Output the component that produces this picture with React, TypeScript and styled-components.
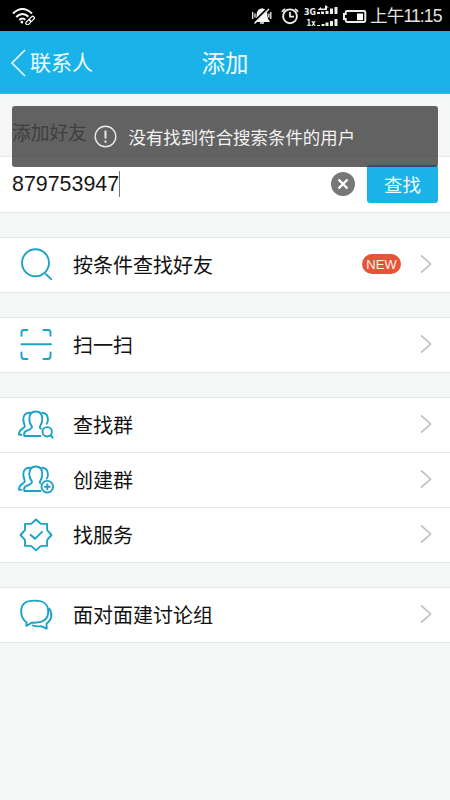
import React from "react";
import styled, { createGlobalStyle } from "styled-components";

const Global = createGlobalStyle`
  * { box-sizing: border-box; }
  body { margin: 0; background: #f5f7f7; }
`;

const Screen = styled.div`
  position: relative;
  width: 450px;
  height: 800px;
  overflow: hidden;
  background: #f5f7f7;
  color: #111;
  font-family: "Liberation Sans", "Noto Sans CJK SC", sans-serif;
`;

const StatusBar = styled.div`
  height: 31px;
  background: #000;
  display: flex;
  align-items: center;
  justify-content: space-between;
  padding: 0 8px 0 11px;
`;

const StatusIcons = styled.div`
  display: flex;
  align-items: center;
`;

const Clock = styled.span`
  width: 72px;
  margin-left: 3px;
  padding-top: 2px;
  color: #e2e2e2;
  font-family: "Liberation Sans", "Noto Sans CJK SC", sans-serif;
  font-size: 17.6px;
  letter-spacing: -0.9px;
  line-height: 29px;
  white-space: nowrap;
`;

const Header = styled.header`
  height: 63px;
  background: #1ab2e9;
  border-bottom: 1px solid #45b9dd;
  display: grid;
  grid-template-columns: 1fr auto 1fr;
  align-items: center;
  color: #edfcff;
`;

const Back = styled.div`
  display: flex;
  align-items: center;
  gap: 4px;
  padding: 2px 0 0 10px;
  font-size: 21px;
  line-height: 32px;
`;

const Title = styled.h1`
  margin: 0;
  padding-top: 3px;
  font-size: 23.5px;
  line-height: 30px;
  font-weight: 400;
`;

const SectionLabel = styled.div`
  height: 62px;
  padding: 24px 12px 0;
  font-size: 18.8px;
  line-height: 32px;
  color: #666;
`;

const Groups = styled.main`
  display: flex;
  flex-direction: column;
  gap: 24px;
`;

const Group = styled.section`
  background: #fff;
  border-bottom: 1px solid #e5e9e9;
`;

const SearchRow = styled.div`
  height: 56px;
  border-top: 1px solid #e5e9e9;
  padding: 0 12px 2px;
  display: flex;
  align-items: center;
`;

const Query = styled.div`
  flex: 1;
  display: flex;
  align-items: center;
  font-size: 21.4px;
  line-height: 26px;
  padding-top: 1px;
  color: #181818;
`;

const Caret = styled.i`
  width: 1px;
  height: 26px;
  background: #777;
`;

const FindButton = styled.button`
  width: 71px;
  height: 38px;
  margin: 0 0 0 12px;
  padding: 0;
  border: 0;
  border-radius: 3px;
  background: #1ab2e9;
  color: #f3fdff;
  font: inherit;
  font-size: 18.5px;
`;

const Row = styled.div`
  height: 55px;
  border-top: 1px solid #e5e9e9;
  padding: 0 18px;
  display: flex;
  align-items: center;
`;

const IconSlot = styled.div`
  width: 55px;
  display: flex;
`;

const Label = styled.span`
  flex: 1;
  padding-top: 1px;
  font-size: 20px;
  line-height: 30px;
`;

const NewBadge = styled.span`
  width: 39px;
  height: 20px;
  margin: 0 17px 2px 0;
  border-radius: 10px;
  background: #e65336;
  color: #fff4f0;
  font-family: "Liberation Sans", sans-serif;
  font-size: 13px;
  line-height: 21px;
  text-align: center;
`;

const Toast = styled.div`
  position: absolute;
  left: 12px;
  top: 106px;
  width: 426px;
  height: 61px;
  border-radius: 3px;
  background: rgba(51, 51, 51, 0.76);
  color: #f2f2f2;
  display: flex;
  align-items: center;
  gap: 12px;
  padding: 0 0 0 81.5px;
  font-size: 17.45px;
  white-space: nowrap;
`;

const LineIcon = styled.svg.attrs({ fill: "none", strokeLinecap: "round", strokeLinejoin: "round" })`
  display: block;
  flex: none;
  overflow: visible;
  stroke: #1ba2c6;
  stroke-width: 1.9;
`;

const ChevronIcon = styled(LineIcon)`
  margin-bottom: 2px;
  stroke: #bdbdbd;
  stroke-width: 1.6;
`;

const Chevron = () => (
  <ChevronIcon width="14" height="20" viewBox="0 0 14 20">
    <path d="M3.5 1.8 12.7 10l-9.2 8.2" />
  </ChevronIcon>
);

type IconName = "search" | "scan" | "groupSearch" | "groupAdd" | "service" | "chat";

const people = (
  <>
    <path d="M22.500 29H6.300c-.7-2.500.2-4.300 2.500-5.300 2.500-1.100 5.200-2 5.200-3.700 0-1.300-2.700-2.500-2.700-8 0-4.700 2.500-7.500 6.500-7.500s6.500 2.800 6.500 7.500c0 5.500-2.500 6.500-2.500 8 0 1.200.7 1.700 1.700 2.200" />
    <path d="M12 5.800c-4.200-.3-6.700 2.300-6.700 6.500 0 4.300 1.800 5.300 1.400 7.200-.4 1.800-3.400 2.300-4.900 4.700-.7 1.200-.9 2.300-.7 3.600h2.400M24.300 5.800c3.800.3 5.600 2.700 5.600 6.700 0 2-.6 3.400-1.200 4.300" />
  </>
);

const drawings: Record<IconName, React.ReactNode> = {
  search: <><circle cx="17.5" cy="15.8" r="13.5" /><path d="m28 27.200 5.200 4.900" /></>,
  scan: <path d="M3.500 8.800V5.500q0-2.500 2.500-2.500h3.500M25.500 3H30q2.500 0 2.500 2.500v3.300M3.500 25.500V29q0 3 2.500 3h3.500M25.500 32H30q2.500 0 2.500-3v-3.500M3.500 17.200h29.500" />,
  groupSearch: <>{people}<circle cx="29.200" cy="25" r="6.500" fill="#fff" stroke="none" /><circle cx="29.200" cy="24.800" r="4.700" /><path d="m32.800 28.500 1.900 2" /></>,
  groupAdd: <>{people}<circle cx="29.500" cy="24.700" r="7.300" fill="#fff" stroke="none" /><circle cx="29.300" cy="24.700" r="5.800" /><path d="M26.800 24.700h5M29.300 22.200v5" /></>,
  service: <><path d="m18 2.500 4.400 4q.7.500 1.500.4h5.200v5.300q0 .8.500 1.500L33.500 18l-3.900 4.400q-.5.600-.5 1.500v5h-5.200q-.8 0-1.500.5L18 33.400l-4.300-4q-.7-.5-1.500-.5H7v-5q0-.9-.5-1.500L2.500 18l4-4.300q.5-.7.500-1.500V6.900h5.200q.8 0 1.500-.5Z" /><path d="m12.500 17.800 4.500 4 7-7" /></>,
  chat: <><path d="M8.500 25.200C4.800 23 3.200 19.500 3.200 14.600c0-7.600 4-11 13.500-11 9.500 0 13.500 3.400 13.500 11s-4 11.100-13.500 11.100h-2.800L8.400 28.800Z" /><path d="M31.300 11.500c3.500 6.200 2.300 11.500-2.800 15.300l.2 4.900-5.500-2.600c-3.200.5-6.700.2-8.500-.6" /></>,
};

const MenuIcon = ({ name }: { name: IconName }) => (
  <LineIcon width="36" height="36" viewBox="0 0 36 36">{drawings[name]}</LineIcon>
);

const groups: { icon: IconName; label: string; fresh?: boolean }[][] = [
  [{ icon: "search", label: "按条件查找好友", fresh: true }],
  [{ icon: "scan", label: "扫一扫" }],
  [
    { icon: "groupSearch", label: "查找群" },
    { icon: "groupAdd", label: "创建群" },
    { icon: "service", label: "找服务" },
  ],
  [{ icon: "chat", label: "面对面建讨论组" }],
];

const WifiIcon = () => (
  <svg width="24" height="18" viewBox="0 0 24 18" fill="none" stroke="#fff" strokeWidth="2">
    <path d="M2 6.500q9.500-9 19 0M5.200 10q6.300-6 12.600 0M8.300 13q3.200-3 6.300 0" />
    <circle cx="11" cy="15.200" r="1.400" fill="#fff" stroke="none" />
    <path d="m16 16 5-5" stroke="#000" strokeWidth="7" strokeLinecap="round" />
    <g strokeWidth="1.200">
      <rect x="14.500" y="13.700" width="5.600" height="3.300" rx="1.600" transform="rotate(-45 17.300 15.300)" />
      <rect x="18" y="10.200" width="5.600" height="3.300" rx="1.600" transform="rotate(-45 20.800 11.800)" />
    </g>
  </svg>
);

const SystemIcons = () => (
  <svg width="116" height="27" viewBox="251 2 116 27" fill="none" stroke="#eee">
    <path d="M254 22h16q-2.500-2.500-2.500-6 0-6.300-4-7.200-1.500-1-3 0-4 .9-4 7.200 0 3.500-2.500 6Z" fill="#f8f8f8" stroke="none" />
    <path d="M260 23h4" strokeWidth="1.500" />
    <path d="m253.500 22 15-14.500" stroke="#000" strokeWidth="1.800" />
    <path d="m254.500 23.500 14.500-14.500" strokeWidth="1.500" />
    <path d="M252.700 12v7M270.800 12v7M255 13.500v4M268.900 13.500v4" strokeWidth="1.300" />
    <circle cx="290" cy="16.300" r="6.900" strokeWidth="1.900" />
    <path d="M290 12v4.600h4M282.300 12q.3-2 3-3M294.800 9q2.600.8 3 3" strokeWidth="1.800" />
    <g fill="#eee" stroke="none">
      <text x="304" y="14.500" fontFamily="DejaVu Sans" fontWeight="700" fontSize="8.500" textLength="12" lengthAdjust="spacingAndGlyphs">3G</text>
      <text x="306.500" y="26" fontFamily="DejaVu Sans" fontWeight="700" fontSize="8" textLength="9" lengthAdjust="spacingAndGlyphs">1x</text>
      <path d="M317 12h3v2h-3zM321 11.500h3V14h-3zM325.500 11h3v3h-3zM330 8.500h3V14h-3zM334.500 7h3v7h-3zM317 25h3v1h-3zM321.500 24h3v2h-3zM325.500 22.500h3V26h-3zM330 21h3v5h-3zM334.500 19h3v7h-3z" />
      <path d="m318 9.500 3-2.500v1.500h4V5l4 2.500h-2V10h-9z" />
    </g>
    <path d="M347 11.100h17q1.300 0 1.300 1.300v8.200q0 1.300-1.300 1.300h-17q-1.300 0-1.300-1.300v-1.700H344v-4.800h1.700v-1.700q0-1.300 1.300-1.300Z" strokeWidth="2" />
    <path d="M357 13.500h6v6.700h-6z" fill="#fff" stroke="none" />
  </svg>
);

export default function App() {
  return (
    <Screen>
      <Global />
      <StatusBar>
        <WifiIcon />
        <StatusIcons><SystemIcons /><Clock>上午11:15</Clock></StatusIcons>
      </StatusBar>
      <Header>
        <Back>
          <svg width="16" height="28" viewBox="0 0 16 28" fill="none" stroke="#e4faff" strokeWidth="1.700">
            <path d="M15 1 2 14l13 13" />
          </svg>
          联系人
        </Back>
        <Title>添加</Title>
      </Header>
      <SectionLabel>添加好友</SectionLabel>
      <Groups>
        <Group>
          <SearchRow>
            <Query>879753947<Caret /></Query>
            <svg width="24" height="24" viewBox="0 0 24 24">
              <circle cx="12" cy="12" r="12" fill="#777" />
              <path d="m7.500 7.500 9 9m0-9-9 9" stroke="#fff" strokeWidth="2.400" />
            </svg>
            <FindButton>查找</FindButton>
          </SearchRow>
        </Group>
        {groups.map((rows) => (
          <Group key={rows[0].icon}>
            {rows.map((row) => (
              <Row key={row.icon}>
                <IconSlot><MenuIcon name={row.icon} /></IconSlot>
                <Label>{row.label}</Label>
                {row.fresh && <NewBadge>NEW</NewBadge>}
                <Chevron />
              </Row>
            ))}
          </Group>
        ))}
      </Groups>
      <Toast>
        <svg width="23" height="23" viewBox="0 0 23 23" fill="none" stroke="#e8e8e8">
          <circle cx="11.500" cy="11.500" r="10.300" strokeWidth="1.400" />
          <path d="M11.500 5.500v8M11.500 15.500v2.200" strokeWidth="2" />
        </svg>
        没有找到符合搜索条件的用户
      </Toast>
    </Screen>
  );
}
